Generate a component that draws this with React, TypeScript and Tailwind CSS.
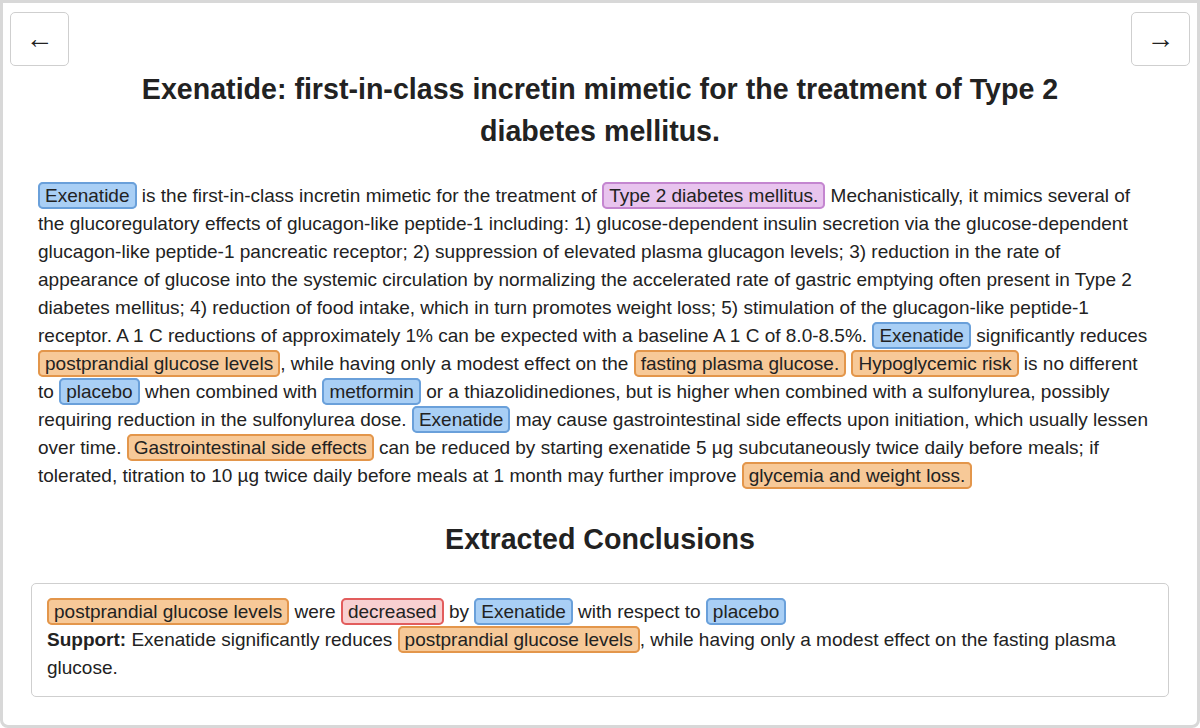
const tone = {
  blue: "bg-[#a9cff5] border-[#6aa0da]",
  orange: "bg-[#f7c998] border-[#e3964b]",
  purple: "bg-[#e8c4ee] border-[#c486d0]",
  red: "bg-[#f8d0d1] border-[#e25d5d]",
};

type Tone = keyof typeof tone;

function Mark({ c, children }: { c: Tone; children: React.ReactNode }) {
  return (
    <span className={`${tone[c]} border-2 rounded-[5px] px-[5px] py-[1px] text-[#222]`}>
      {children}
    </span>
  );
}

function NavButton({ label }: { label: string }) {
  return (
    <button className="w-[59px] h-[54px] border border-[#cfcfcf] rounded-[5px] bg-white flex items-center justify-center text-[28px] text-[#222] leading-none">
      {label}
    </button>
  );
}

export default function App() {
  return (
    <div
      className="w-[1200px] h-[728px] bg-white text-[#222] overflow-hidden"
      style={{ fontFamily: '"Liberation Sans", Arial, sans-serif' }}
    >
      <div className="h-full border-[3px] border-[#d8d8d8] rounded-b-[8px] px-[7px] pt-[9px]">
        <div className="flex justify-between">
          <NavButton label="←" />
          <NavButton label="→" />
        </div>

        <div className="px-[21px]">
          <h1 className="mt-[2px] max-w-[980px] mx-auto text-center font-bold text-[28.6px] leading-[42px] text-[#222]">
            Exenatide: first-in-class incretin mimetic for the treatment of Type 2 diabetes mellitus.
          </h1>

          <p className="mt-[30px] pl-[7px] pr-[12px] text-[19px] leading-[28px]">
            <Mark c="blue">Exenatide</Mark> is the first-in-class incretin mimetic for the treatment of{" "}
            <Mark c="purple">Type 2 diabetes mellitus.</Mark> Mechanistically, it mimics several of the
            glucoregulatory effects of glucagon-like peptide-1 including: 1) glucose-dependent insulin
            secretion via the glucose-dependent glucagon-like peptide-1 pancreatic receptor; 2) suppression
            of elevated plasma glucagon levels; 3) reduction in the rate of appearance of glucose into the
            systemic circulation by normalizing the accelerated rate of gastric emptying often present in
            Type 2 diabetes mellitus; 4) reduction of food intake, which in turn promotes weight loss; 5)
            stimulation of the glucagon-like peptide-1 receptor. A 1 C reductions of approximately 1% can be
            expected with a baseline A 1 C of 8.0-8.5%. <Mark c="blue">Exenatide</Mark> significantly reduces{" "}
            <Mark c="orange">postprandial glucose levels</Mark>, while having only a modest effect on the{" "}
            <Mark c="orange">fasting plasma glucose.</Mark> <Mark c="orange">Hypoglycemic risk</Mark> is no
            different to <Mark c="blue">placebo</Mark> when combined with <Mark c="blue">metformin</Mark> or a
            thiazolidinediones, but is higher when combined with a sulfonylurea, possibly requiring reduction
            in the sulfonylurea dose. <Mark c="blue">Exenatide</Mark> may cause gastrointestinal side effects
            upon initiation, which usually lessen over time.{" "}
            <Mark c="orange">Gastrointestinal side effects</Mark> can be reduced by starting exenatide 5 µg
            subcutaneously twice daily before meals; if tolerated, titration to 10 µg twice daily before meals
            at 1 month may further improve <Mark c="orange">glycemia and weight loss.</Mark>
          </p>

          <h2 className="mt-[28px] text-center font-bold text-[28.6px] leading-[42px] text-[#222]">
            Extracted Conclusions
          </h2>

          <div className="mt-[23px] border border-[#cfcfcf] rounded-[5px] px-[15px] py-[14px] text-[19px] leading-[28px]">
            <div>
              <Mark c="orange">postprandial glucose levels</Mark> were <Mark c="red">decreased</Mark> by{" "}
              <Mark c="blue">Exenatide</Mark> with respect to <Mark c="blue">placebo</Mark>
            </div>
            <div>
              <span className="font-bold">Support:</span> Exenatide significantly reduces{" "}
              <Mark c="orange">postprandial glucose levels</Mark>, while having only a modest effect on the
              fasting plasma glucose.
            </div>
          </div>
        </div>
      </div>
    </div>
  );
}
